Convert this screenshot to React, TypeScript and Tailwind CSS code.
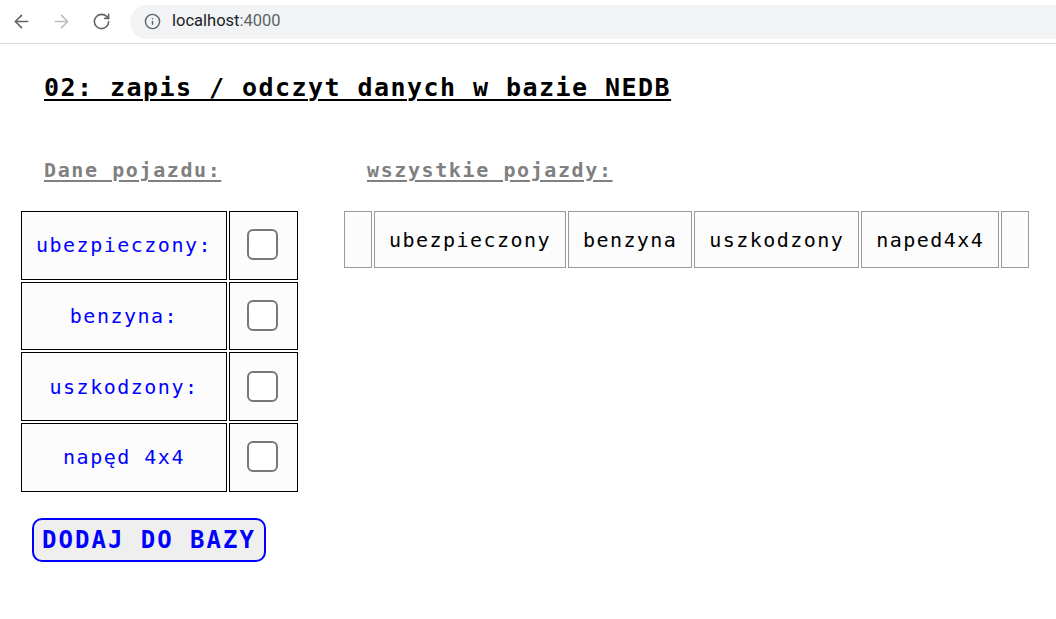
import React from 'react';
import { ArrowLeft, ArrowRight, RotateCw, Info } from 'lucide-react';

const fields = ['ubezpieczony:', 'benzyna:', 'uszkodzony:', 'napęd 4x4'];
const columns = ['', 'ubezpieczony', 'benzyna', 'uszkodzony', 'naped4x4', ''];

const mono = "font-['DejaVu_Sans_Mono',monospace]";

export default function App() {
  return (
    <div className="min-h-screen bg-white">
      {/* pasek przegladarki */}
      <div className="h-[44px] border-b border-[#dadce0] flex items-center bg-white">
        <div className="flex items-center gap-[19px] pl-[11px] pr-[19px] text-[#5f6368]">
          <ArrowLeft size={21} strokeWidth={1.8} />
          <ArrowRight size={21} strokeWidth={1.8} className="text-[#babcbe]" />
          <RotateCw size={19} strokeWidth={2} className="ml-[1px]" />
        </div>
        <div className="flex-1 h-[34px] bg-[#f1f3f4] rounded-l-full flex items-center pl-[14px] gap-[11px] font-['Roboto',sans-serif] text-[16.5px]">
          <Info size={17} strokeWidth={2} className="text-[#5f6368]" />
          <span className="text-[#202124]">
            localhost<span className="text-[#5f6368]">:4000</span>
          </span>
        </div>
      </div>

      <div className={`${mono} pl-[19px]`}>
        <h1 className="mt-[28px] ml-[25px] text-[25px] leading-[32px] tracking-[1.45px] font-bold underline underline-offset-[3px] decoration-2 text-black">
          02: zapis / odczyt danych w bazie NEDB
        </h1>

        <div className="flex mt-[54px]">
          {/* formularz */}
          <div className="w-[323px] shrink-0">
            <h2 className="ml-[25px] text-[20px] leading-[24px] tracking-[1.6px] font-bold underline underline-offset-[3px] text-[#808080]">
              Dane pojazdu:
            </h2>
            <div className="mt-[29px] ml-[2px] grid grid-cols-[206px_69px] gap-[2px]">
              {fields.map((f) => (
                <React.Fragment key={f}>
                  <div className="h-[68.7px] border border-black bg-[#fcfcfc] flex items-center justify-center text-[20px] tracking-[1.5px] text-[#0000ff]">
                    {f}
                  </div>
                  <div className="h-[68.7px] border border-black bg-[#fcfcfc] flex items-center justify-center">
                    <input
                      type="checkbox"
                      className="appearance-none w-[31px] h-[31px] border-[2.5px] border-[#787878] rounded-[6px] bg-white -ml-[2px] -mt-[1px]"
                    />
                  </div>
                </React.Fragment>
              ))}
            </div>
            <button className="mt-[26px] ml-[13px] h-[44px] w-[234px] border-2 border-[#0000ff] rounded-[10px] bg-[#efefef] text-[#0000ff] text-[24px] tracking-[2px] font-bold flex items-center justify-center">
              DODAJ DO BAZY
            </button>
          </div>

          {/* lista */}
          <div>
            <h2 className="ml-[25px] text-[20px] leading-[24px] tracking-[1.6px] font-bold underline underline-offset-[3px] text-[#808080]">
              wszystkie pojazdy:
            </h2>
            <div className="mt-[29px] ml-[2px] flex gap-[2px]">
              {columns.map((c, i) => (
                <div
                  key={i}
                  className={`h-[57px] border border-[#9a9a9a] bg-[#fcfcfc] flex items-center justify-center text-[20px] tracking-[1.45px] text-black ${
                    c ? 'px-[14px]' : 'w-[28px]'
                  }`}
                >
                  {c}
                </div>
              ))}
            </div>
          </div>
        </div>
      </div>
    </div>
  );
}
